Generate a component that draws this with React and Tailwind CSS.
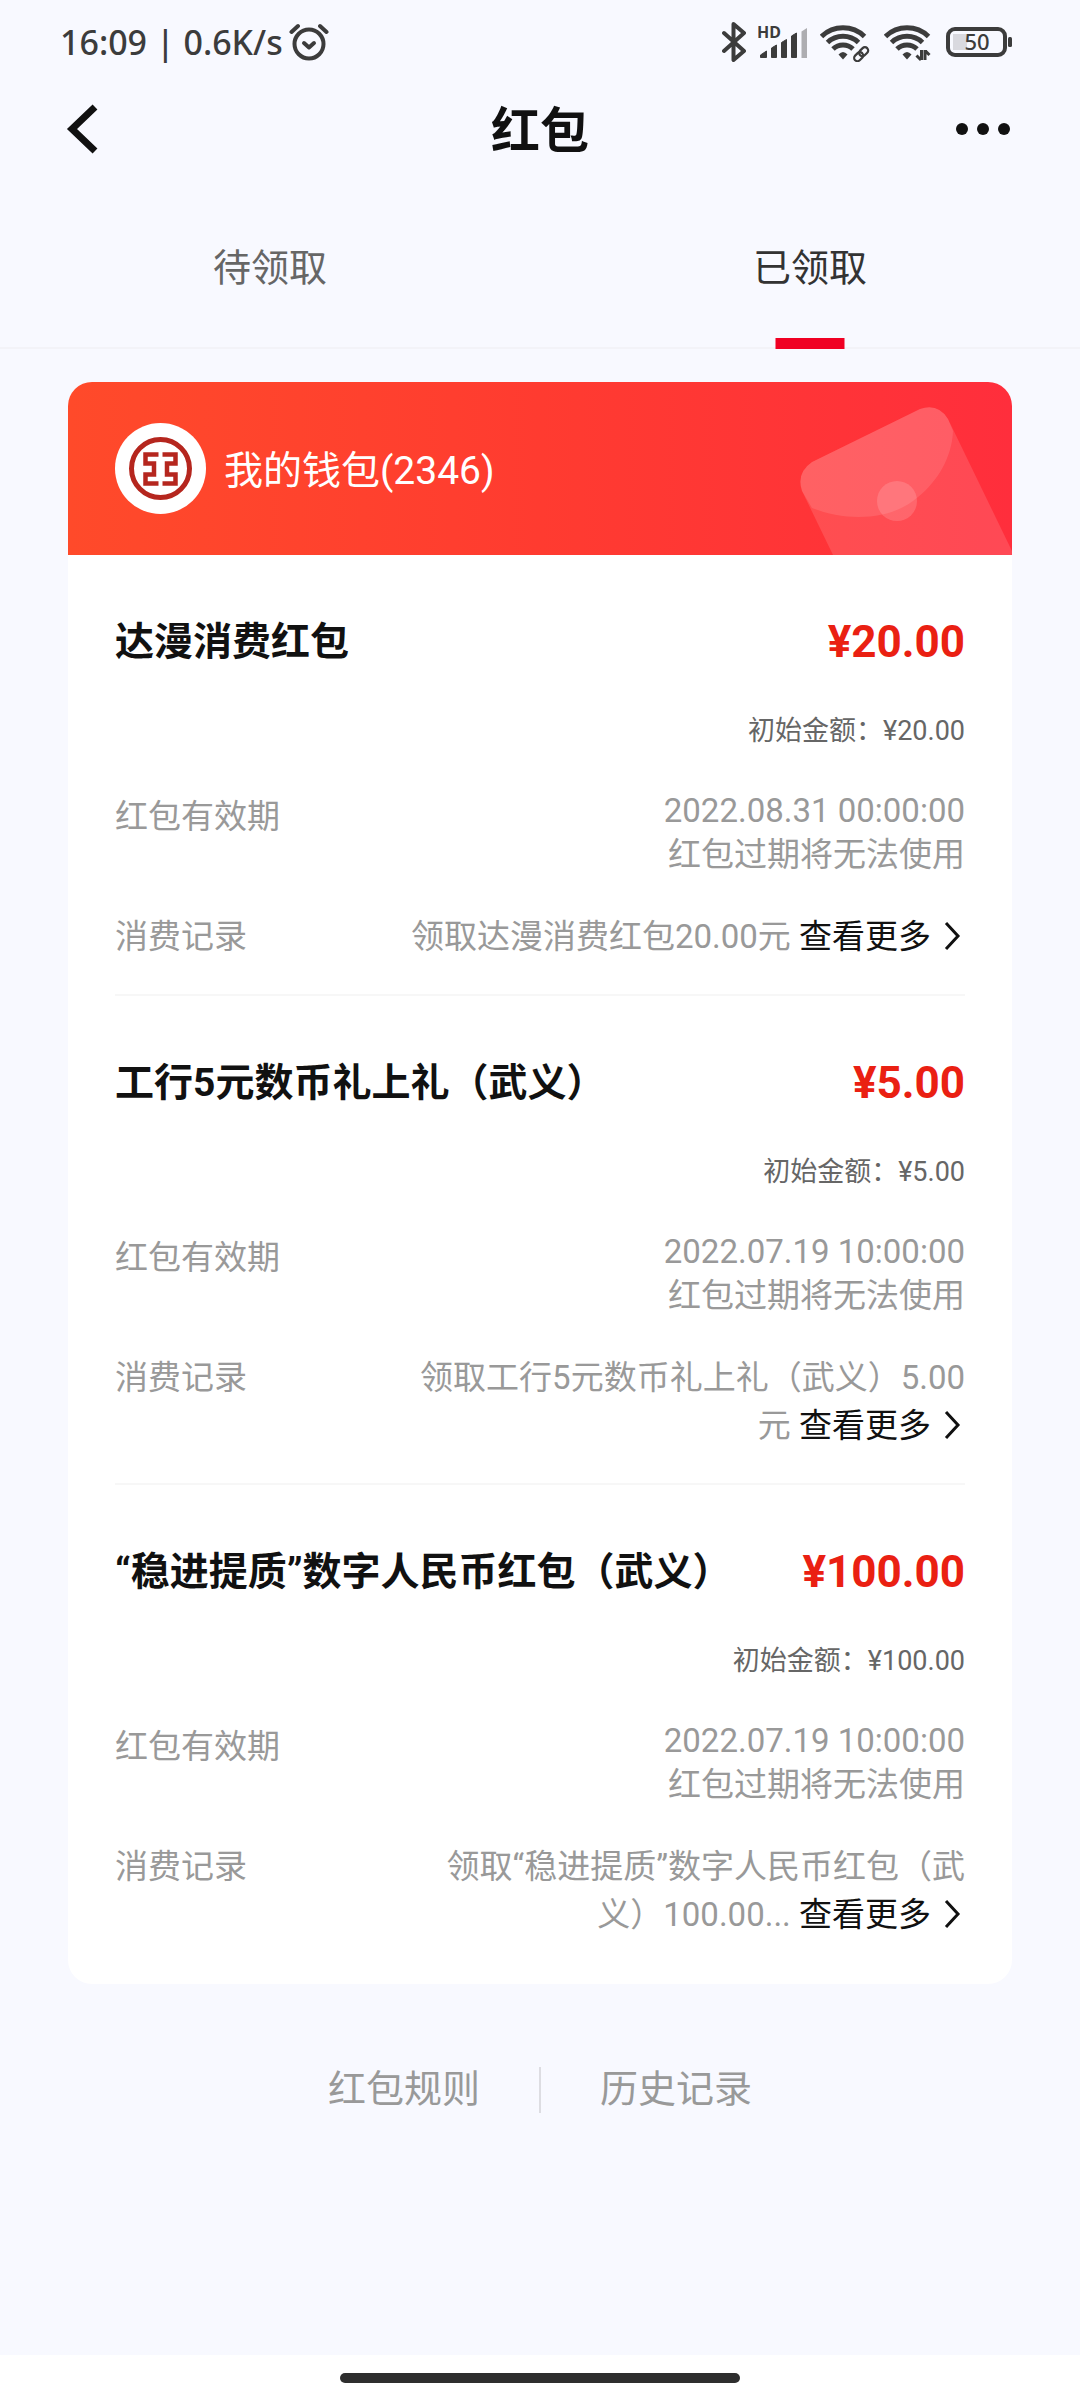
const packets = [
  {
    title: '达漫消费红包',
    amount: '¥20.00',
    expires: '2022.08.31 00:00:00',
    record: '领取达漫消费红包20.00元',
  },
  {
    title: '工行5元数币礼上礼（武义）',
    amount: '¥5.00',
    expires: '2022.07.19 10:00:00',
    record: '领取工行5元数币礼上礼（武义）5.00元',
  },
  {
    title: '“稳进提质”数字人民币红包（武义）',
    amount: '¥100.00',
    expires: '2022.07.19 10:00:00',
    record: '领取“稳进提质”数字人民币红包（武\n义）100.00...',
  },
];

function AlarmIcon() {
  return (
    <svg className="h-10 w-10" viewBox="0 0 40 40" fill="none" stroke="currentColor" strokeWidth="4" strokeLinecap="round" strokeLinejoin="round">
      <circle cx="20" cy="22" r="14.5" />
      <path d="M15 21l5 4.500l5-4.500" />
      <path d="M2.500 10l6.500-6M37.500 10l-6.500-6" />
    </svg>
  );
}

function BluetoothIcon() {
  return (
    <svg className="h-10 w-6" viewBox="0 0 24 40" fill="none" stroke="currentColor" strokeWidth="4" strokeLinecap="round" strokeLinejoin="round">
      <path d="M2 11l20 18-10.500 9V2L22 11 2 29" />
    </svg>
  );
}

function SignalIcon() {
  return (
    <svg className="h-10 w-[50px]" viewBox="0 0 50 40" fill="currentColor">
      <text x="-1" y="16" fontSize="16" fontWeight="700">HD</text>
      <path d="M2.500 35.500v-2.500l6-4v6.500zM13.500 35.500V26l5-3v12.500zM23.500 35.500V20.500l5-3v18zM33.500 35.500V14l5-3v24.500z" stroke="currentColor" strokeLinejoin="round" />
      <path d="M43.500 36V9.500l5.500-3.500v30z" opacity="0.4" />
    </svg>
  );
}

function WifiIcon({ children }) {
  return (
    <svg className="h-10 w-[50px]" viewBox="0 0 50 40" fill="none" stroke="currentColor" strokeWidth="5">
      <path d="M1.500 14.500a31 31 0 0 1 43 0" />
      <path d="M7.500 20.500a22.500 22.500 0 0 1 31 0" />
      <path d="M13 27a14.500 14.500 0 0 1 20 0" />
      <path d="M18.500 32.500q4.500-5 9 0l-4.500 5z" fill="currentColor" stroke="none" />
      {children}
    </svg>
  );
}

function BatteryIcon() {
  return (
    <svg className="h-10 w-[67px]" viewBox="0 0 67 40" fill="none">
      <rect x="7" y="12" width="14" height="16" fill="#d9d9df" />
      <rect x="2" y="7" width="57" height="26" rx="7" stroke="currentColor" strokeWidth="4" />
      <rect x="62" y="15" width="4" height="10" rx="1.500" fill="currentColor" />
      <text x="31" y="28" fontSize="22" fontWeight="500" textAnchor="middle" fill="currentColor">50</text>
    </svg>
  );
}

function StatusBar() {
  return (
    <div className="flex h-[84px] items-center justify-between pl-[60px] pr-[67px] font-['Noto_Sans',sans-serif] text-[34px] font-medium text-[#3c3c3c]">
      <div className="flex items-center gap-1.5">
        <span>16:09 | 0.6K/s</span>
        <AlarmIcon />
      </div>
      <div className="flex items-center gap-3">
        <BluetoothIcon />
        <SignalIcon />
        <div className="flex gap-3.5">
          <WifiIcon>
            <g strokeWidth="2.200">
              <rect x="-5" y="-3" width="10" height="6.500" rx="3.200" transform="translate(38.500 34.500) rotate(-45)" />
              <rect x="-5" y="-3" width="10" height="6.500" rx="3.200" transform="translate(43.500 29.500) rotate(-45)" />
            </g>
          </WifiIcon>
          <WifiIcon>
            <path d="M37.500 38V28M41 28v10M32.500 33.500l4.500 4.500M41.500 29l4 4" strokeWidth="3" />
          </WifiIcon>
        </div>
        <BatteryIcon />
      </div>
    </div>
  );
}

function NavBar() {
  return (
    <header className="grid h-[90px] grid-cols-3 items-center px-[66px] text-[#111]">
      <button type="button" aria-label="返回" className="justify-self-start">
        <svg className="h-[50px] w-8" viewBox="0 0 32 50" fill="none" stroke="currentColor" strokeWidth="7">
          <path d="M29 3L6 25l23 22" />
        </svg>
      </button>
      <h1 className="pt-1 text-center text-[49px] font-bold leading-none">红包</h1>
      <button type="button" aria-label="更多" className="mr-1 flex gap-[9px] justify-self-end">
        <span className="size-3 rounded-full bg-current" />
        <span className="size-3 rounded-full bg-current" />
        <span className="size-3 rounded-full bg-current" />
      </button>
    </header>
  );
}

function Tabs() {
  return (
    <nav className="grid h-[175px] grid-cols-2 border-b-2 border-[#f3f3f8] text-[38px]">
      <button type="button" className="pt-4 text-[#666]">待领取</button>
      <button type="button" className="relative pt-4 text-[#333]">
        已领取
        <span className="absolute -bottom-0.5 left-1/2 h-[11px] w-[69px] -translate-x-1/2 bg-[#f00023]" />
      </button>
    </nav>
  );
}

function BankLogo() {
  return (
    <svg className="size-[91px]" viewBox="0 0 91 91" fill="none">
      <circle cx="45.500" cy="45.500" r="45.500" fill="#fff" />
      <circle cx="45.500" cy="45.500" r="29" stroke="#b5261e" strokeWidth="5" />
      <path d="M43.500 31.500H30.500V40.500H39V51.500H30.500V60.500H43.500M47.500 31.500H60.500V40.500H52V51.500H60.500V60.500H47.500" stroke="#b5261e" strokeWidth="4.500" />
    </svg>
  );
}

function Envelope() {
  return (
    <svg className="absolute bottom-0 right-0 h-[148px] w-[212px]" viewBox="0 0 212 148" fill="#fff">
      <path d="M33 148L2 84Q-4 66 12 55L120 2Q138-4 148 12L212 144V148z" opacity="0.13" />
      <path d="M12 101L2 84Q-4 66 12 55L120 2Q138-4 148 12L153 24C152 50 138 74 118 90C94 112 50 116 12 101z" opacity="0.11" />
      <circle cx="97" cy="94" r="20" opacity="0.15" />
    </svg>
  );
}

function Packet({ packet }) {
  return (
    <li className="border-b-2 border-[#f7f7f7] pb-[33px] pt-14 text-[33px] text-[#999] last:border-b-0 last:pb-[45px]">
      <div className="flex items-center justify-between leading-[62px]">
        <h2 className="text-[39px] font-bold text-[#111]">{packet.title}</h2>
        <strong className="text-[44px] font-bold text-[#ea2012]">{packet.amount}</strong>
      </div>
      <p className="mt-9 text-right text-[27px] leading-[44px] text-[#666]">初始金额：{packet.amount}</p>
      <dl className="mt-9">
        <div className="flex justify-between leading-[44px]">
          <dt className="pt-1.5">红包有效期</dt>
          <dd className="text-right">
            {packet.expires}
            <br />
            红包过期将无法使用
          </dd>
        </div>
        <div className="mt-9 flex justify-between leading-[48px]">
          <dt>消费记录</dt>
          <dd className="w-[560px] whitespace-pre-line text-right">
            {packet.record}{' '}
            <a href="#records" className="whitespace-nowrap text-[#111]">
              查看更多
              <svg className="ml-3 mr-0.5 inline h-8 w-5 align-[-4px]" viewBox="0 0 20 32" fill="none" stroke="currentColor" strokeWidth="3">
                <path d="M3 3l12 13L3 29" />
              </svg>
            </a>
          </dd>
        </div>
      </dl>
    </li>
  );
}

export default function App() {
  return (
    <div className="flex min-h-screen flex-col bg-[#f8f9ff] font-[Roboto,'Noto_Sans_CJK_SC',sans-serif]">
      <StatusBar />
      <NavBar />
      <Tabs />
      <main className="mx-[68px] mt-[33px]">
        <section className="overflow-hidden rounded-3xl bg-white">
          <div className="relative flex h-[173px] items-center gap-[18px] bg-linear-to-r from-[#ff4a2a] via-[#ff3b30] to-[#ff2e3c] px-[47px] text-[39px] text-white">
            <BankLogo />
            <span className="pt-1.5">我的钱包(2346)</span>
            <Envelope />
          </div>
          <ul className="px-[47px]">
            {packets.map((packet) => (
              <Packet key={packet.title} packet={packet} />
            ))}
          </ul>
        </section>
      </main>
      <footer className="mt-[77px] flex items-center justify-center gap-[59px] text-[38px] text-[#999]">
        <a href="#rules">红包规则</a>
        <span className="h-[46px] w-0.5 bg-[#dddde2]" />
        <a href="#history">历史记录</a>
      </footer>
      <div className="mt-auto flex h-[45px] justify-center bg-white pt-[18px]">
        <span className="h-2.5 w-[400px] rounded-full bg-[#2e2e2e]" />
      </div>
    </div>
  );
}
